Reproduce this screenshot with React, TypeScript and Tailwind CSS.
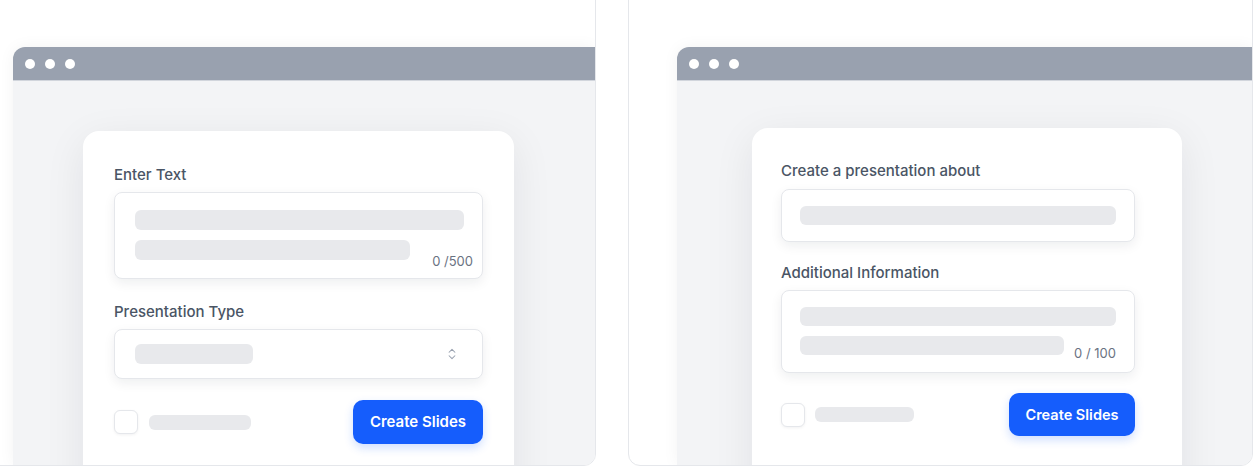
import { ChevronsUpDown } from "lucide-react";

const Bar = ({ w, h = "h-5" }: { w: string; h?: string }) => (
  <div className={`${w} ${h} rounded-md bg-[#e8e9ec]`} />
);

const Label = ({ children }: { children: string }) => (
  <div className="text-[15px] font-medium leading-5 text-gray-600">{children}</div>
);

const Box = ({ className, children }: { className: string; children: any }) => (
  <div className={`rounded-lg border border-gray-200 bg-white shadow-[0_4px_12px_rgba(15,23,42,0.07)] ${className}`}>
    {children}
  </div>
);

const Browser = ({ children }: { children: any }) => (
  <div className="flex flex-1 flex-col overflow-hidden rounded-tl-[12px] shadow-[0_0_16px_rgba(15,23,42,0.05)]">
    <div className="flex h-[34px] shrink-0 items-center gap-[10px] border-b border-gray-300 bg-gray-400 pl-[12px]">
      <span className="h-[10px] w-[10px] rounded-full bg-white" />
      <span className="h-[10px] w-[10px] rounded-full bg-white" />
      <span className="h-[10px] w-[10px] rounded-full bg-white" />
    </div>
    <div className="flex-1 bg-gray-100">{children}</div>
  </div>
);

const Card = ({ className, children }: { className: string; children: any }) => (
  <div className={`h-[400px] rounded-t-2xl bg-white shadow-[0_10px_40px_rgba(15,23,42,0.08)] ${className}`}>
    {children}
  </div>
);

const Checkbox = () => (
  <div className="h-6 w-6 rounded-md border border-gray-200 bg-white shadow-[0_1px_3px_rgba(15,23,42,0.06)]" />
);

const Button = ({ className }: { className: string }) => (
  <button className={`rounded-[10px] bg-blue-600 font-semibold text-white shadow-[0_4px_10px_rgba(21,93,252,0.2)] ${className}`}>
    Create Slides
  </button>
);

export default function App() {
  return (
    <div className="h-[470px] w-[1253px] overflow-hidden bg-white" style={{ fontFamily: "Inter, 'Noto Sans', sans-serif" }}>
      <div className="-ml-[29px] -mt-[20px] flex gap-[32px]">
        {/* left panel */}
        <div className="flex h-[486px] w-[625px] overflow-hidden rounded-xl border border-gray-200 bg-white pl-[41px] pt-[66px]">
          <Browser>
            <Card className="ml-[70px] mt-[50px] w-[431px] px-[31px] pt-[34px]">
              <Label>Enter Text</Label>
              <Box className="mt-[7px] h-[87px] pl-[20px] pr-[9px] pt-[17px]">
                <div className="pr-[9px]">
                  <Bar w="w-full" />
                </div>
                <div className="mt-[10px] flex items-end justify-between">
                  <Bar w="w-[275px]" />
                  <span className="-mb-[9px] text-[13px] leading-4 text-gray-500">0 /500</span>
                </div>
              </Box>
              <div className="mt-[23px]">
                <Label>Presentation Type</Label>
              </div>
              <Box className="mt-[7px] flex h-[50px] items-center justify-between pl-[20px] pr-[23px]">
                <Bar w="w-[118px]" />
                <ChevronsUpDown size={14} strokeWidth={1.75} className="text-gray-400" />
              </Box>
              <div className="mt-[21px] flex items-center justify-between">
                <div className="flex items-center gap-[11px]">
                  <Checkbox />
                  <Bar w="w-[102px]" h="h-[15px]" />
                </div>
                <Button className="h-[44px] w-[130px] text-[15px]" />
              </div>
            </Card>
          </Browser>
        </div>

        {/* right panel */}
        <div className="flex h-[486px] w-[625px] overflow-hidden rounded-xl border border-gray-200 bg-white pl-[48px] pt-[66px]">
          <Browser>
            <Card className="ml-[75px] mt-[47px] w-[430px] pl-[29px] pr-[47px] pt-[33px]">
              <Label>Create a presentation about</Label>
              <Box className="mt-[8px] flex h-[53px] items-center px-[18px]">
                <Bar w="w-full" h="h-[19px]" />
              </Box>
              <div className="mt-[21px]">
                <Label>Additional Information</Label>
              </div>
              <Box className="mt-[7px] h-[83px] px-[18px] pt-[16px]">
                <Bar w="w-full" h="h-[19px]" />
                <div className="mt-[10px] flex items-end justify-between">
                  <Bar w="w-[264px]" h="h-[19px]" />
                  <span className="-mb-[6px] text-[13px] leading-4 text-gray-500">0 / 100</span>
                </div>
              </Box>
              <div className="mt-[20px] flex items-center justify-between">
                <div className="flex items-center gap-[10px]">
                  <Checkbox />
                  <Bar w="w-[99px]" h="h-[15px]" />
                </div>
                <Button className="h-[43px] w-[126px] text-[14.5px]" />
              </div>
            </Card>
          </Browser>
        </div>
      </div>
    </div>
  );
}
